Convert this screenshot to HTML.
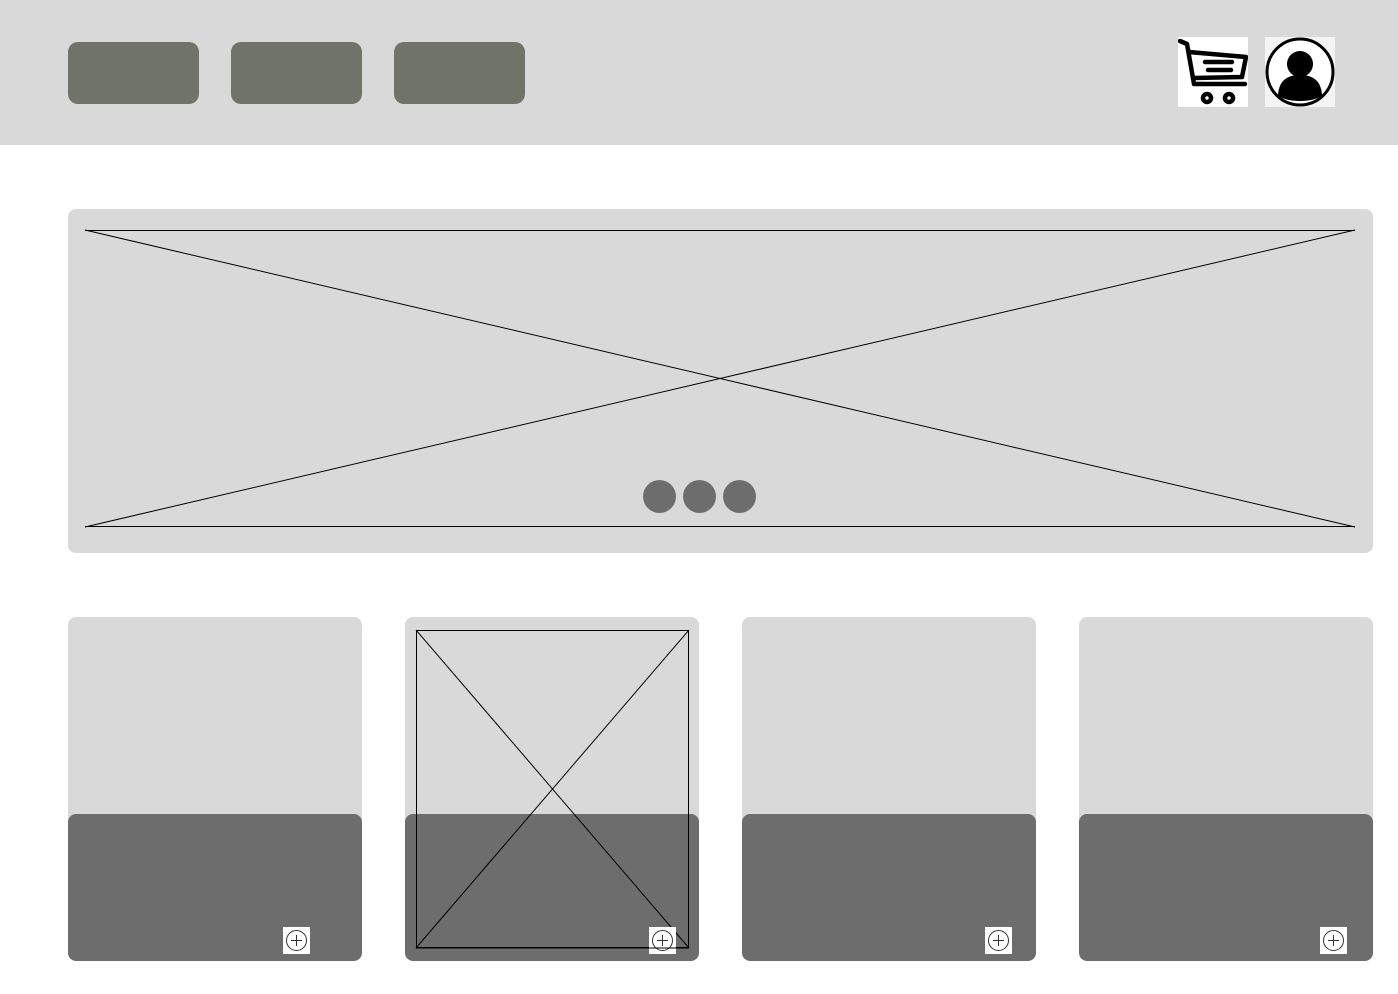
<!DOCTYPE html>
<html><head><meta charset="utf-8"><style>
*{margin:0;padding:0;box-sizing:border-box}
body{width:1398px;height:994px;background:#fff;position:relative;overflow:hidden;font-family:"Liberation Sans",sans-serif}
.abs{position:absolute}
.hdr{left:0;top:0;width:1398px;height:145px;background:#d9d9d9}
.btn{top:42px;width:131px;height:62px;background:#707468;border-radius:10px}
.banner{left:68px;top:209px;width:1305px;height:344px;background:#d9d9d9;border-radius:8px}
.dot{top:480px;width:33px;height:33px;border-radius:50%;background:#6d6d6d}
.card{top:617px;width:294px;height:344px;background:#d9d9d9;border-radius:8px;overflow:hidden}
.card .bot{position:absolute;left:0;top:197px;width:294px;height:147px;background:#6d6d6d;border-radius:8px}
.plus{top:927px;width:27px;height:27px;background:#fff}
</style></head><body>
<div class="abs hdr"></div>
<div class="abs btn" style="left:68px"></div>
<div class="abs btn" style="left:231px"></div>
<div class="abs btn" style="left:394px"></div>
<div class="abs" style="left:1178px;top:37px;width:70px;height:70px;background:#fff">
<svg width="70" height="70" viewBox="0 0 70 70"><g fill="none" stroke="#000" stroke-width="4.5" stroke-linecap="round" stroke-linejoin="round">
<path d="M2 4 L9 7 L16 47 L67 47"/><path d="M11 15 L68 20 L64 40 L16 41"/>
<path d="M27 25 L54 25 M30 33 L53 33"/>
<circle cx="29" cy="61" r="4"/><circle cx="51" cy="61" r="4"/></g></svg></div>
<div class="abs" style="left:1265px;top:37px;width:70px;height:70px;background:#f4f4f4">
<svg width="70" height="70" viewBox="0 0 70 70"><circle cx="35" cy="35" r="33" fill="#fff" stroke="#000" stroke-width="3"/>
<circle cx="35" cy="27" r="13" fill="#000"/><path d="M13 58 C14 42 24 38 35 38 C46 38 56 42 57 58 C50 66 20 66 13 58Z" fill="#000"/></svg></div>
<div class="abs banner"></div>
<svg class="abs" style="left:0;top:0" width="1398" height="994">
<g stroke="#000" stroke-width="1" fill="none">
<line x1="85" y1="230.5" x2="1355" y2="230.5"/><line x1="85" y1="526.5" x2="1355" y2="526.5"/>
<line x1="85" y1="230" x2="1355" y2="527"/><line x1="85" y1="527" x2="1355" y2="230"/>
</g></svg>
<div class="abs dot" style="left:643px"></div>
<div class="abs dot" style="left:683px"></div>
<div class="abs dot" style="left:723px"></div>
<div class="abs card" style="left:68px"><div class="bot"></div></div>
<div class="abs card" style="left:405px"><div class="bot"></div></div>
<div class="abs card" style="left:742px"><div class="bot"></div></div>
<div class="abs card" style="left:1079px"><div class="bot"></div></div>
<svg class="abs" style="left:0;top:0" width="1398" height="994">
<g stroke="#000" stroke-width="1" fill="none">
<rect x="416.5" y="630.5" width="272" height="317"/>
<line x1="416" y1="630" x2="689" y2="948"/><line x1="416" y1="948" x2="689" y2="630"/>
</g></svg>
<div class="abs plus" style="left:283px"></div>
<div class="abs plus" style="left:649px"></div>
<div class="abs plus" style="left:985px"></div>
<div class="abs plus" style="left:1320px"></div>
<svg class="abs" style="left:0;top:0" width="1398" height="994">
<g stroke="#333" stroke-width="1" fill="none">
<circle cx="296.5" cy="940.5" r="10"/><path d="M296.5 935v11M291 940.5h11"/>
<circle cx="662.5" cy="940.5" r="10"/><path d="M662.5 935v11M657 940.5h11"/>
<circle cx="998.5" cy="940.5" r="10"/><path d="M998.5 935v11M993 940.5h11"/>
<circle cx="1333.5" cy="940.5" r="10"/><path d="M1333.5 935v11M1328 940.5h11"/>
</g>
<line x1="416" y1="948" x2="689" y2="948" stroke="#000"/>
</svg>
</body></html>
